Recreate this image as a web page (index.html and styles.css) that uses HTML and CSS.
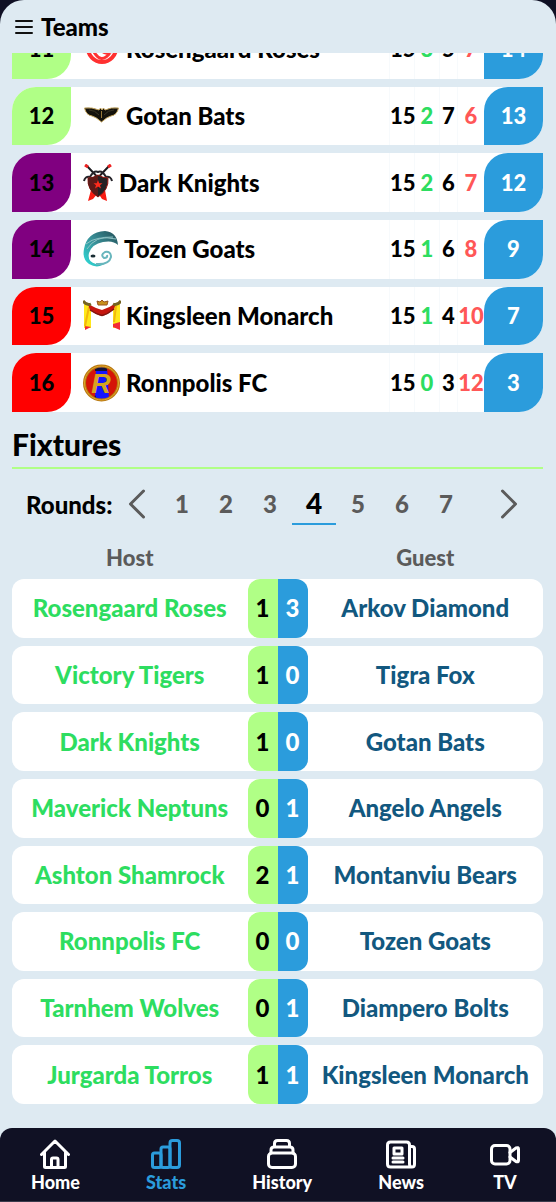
FILE: index.html
```html
<!DOCTYPE html>
<html lang="en">
<head>
<meta charset="utf-8">
<meta name="viewport" content="width=device-width, initial-scale=1">
<title>Teams</title>
<link rel="stylesheet" href="styles.css">
</head>
<body>
<div class="app">
  <header class="topbar">
    <button class="menu" type="button" aria-label="Menu"><svg width="18" height="16" viewBox="0 0 18 16"><path d="M1 2H17M1 8H17M1 14H17"/></svg></button>
    <h1 class="title">Teams</h1>
  </header>
  <main class="scroller">
    <div class="content">
      <table class="standings">
        <colgroup><col class="c-pos"><col><col class="c-num"><col class="c-num"><col class="c-draw"><col class="c-lost"><col class="c-pos"></colgroup>
        <tbody>
          <tr><td class="pos promo">11</td><td class="club"><div class="club-in"><svg width="38" height="38" viewBox="0 0 38 38"><circle cx="19" cy="18" r="14" fill="none" stroke="#ff3030" stroke-width="4"/><path d="M8 16Q18 40 30 18M10 10Q24 34 34 14" fill="none" stroke="#f33" stroke-width="3"/></svg><span>Rosengaard Roses</span></div></td><td class="num">15</td><td class="num won">3</td><td class="num">5</td><td class="num lost">7</td><td class="pts">14</td></tr>
          <tr><td class="pos promo">12</td><td class="club"><div class="club-in"><svg width="38" height="38" viewBox="0 0 38 38"><path d="M1.500 11Q9 10 16 13L17.500 11L19 13L20.500 11L22 13Q28 10 35.500 11Q34 18 28 19Q24 20 18.500 25Q13 20 9 19Q3 18 1.500 11Z" fill="#14120c" stroke="#c3a45d" stroke-width="1"/><path d="M6 13Q12 13 16 18M31 13Q25 13 21 18" stroke="#3b3524" fill="none"/><path d="M18.500 14V21" stroke="#97783a" stroke-width="1"/></svg><span>Gotan Bats</span></div></td><td class="num">15</td><td class="num won">2</td><td class="num">7</td><td class="num lost">6</td><td class="pts">13</td></tr>
          <tr><td class="pos playoff">13</td><td class="club"><div class="club-in"><svg width="31" height="38" viewBox="0 0 31 38"><path d="M8 26L5 37L10 35L15 29L19 35L24 37L22 26Z" fill="#f81b12"/><path d="M3 1L22 21M27 1L8 21" stroke="#1d1b20" stroke-width="2"/><path d="M2 1L5 3M28 1L25 3" stroke="#e22" stroke-width="3"/><path d="M1 17Q2 12 7 13Q11 6 15 8Q19 6 23 13Q28 12 29 17" fill="none" stroke="#26242a" stroke-width="2"/><path d="M5 14Q10 14 15 11Q20 14 25 14Q26 26 15 33Q4 26 5 14Z" fill="#242124" stroke="#9b1712" stroke-width="1"/><path d="M5 14Q10 14 15 11V33Q4 26 5 14" fill="#5c1a18"/><path d="M15 16L16.200 19.200L19.500 19.300L17 21.300L18 24.500L15 22.600L12 24.500L13 21.300L10.500 19.300L13.800 19.200Z" fill="#ff2b1c"/></svg><span>Dark Knights</span></div></td><td class="num">15</td><td class="num won">2</td><td class="num">6</td><td class="num lost">7</td><td class="pts">12</td></tr>
          <tr><td class="pos playoff">14</td><td class="club"><div class="club-in"><svg width="36" height="38" viewBox="0 0 36 38"><defs><linearGradient id="goat" x1="1" y1="0" x2="0" y2="1"><stop offset="0" stop-color="#234f58"/><stop offset=".5" stop-color="#3a9199"/><stop offset="1" stop-color="#2ce0dc"/></linearGradient></defs><path d="M1 19Q4 2 22 1Q34 2 35 15Q30 10 20 12Q9 14 6 23Q4 32 13 34Q22 35 25 31Q16 40 6 34Q-1 29 1 19Z" fill="url(#goat)"/><path d="M3 14Q14 5 33 9M4 19Q12 6 30 7" stroke="#8fc3c5" fill="none"/><path d="M13 34Q26 35 28 27Q28 21 22 22Q17 25 21 28Q25 28 24 25" fill="none" stroke="#68b6bd" stroke-width="2"/><ellipse cx="10" cy="26" rx="2.500" ry="1.500" fill="#182c33"/></svg><span>Tozen Goats</span></div></td><td class="num">15</td><td class="num won">1</td><td class="num">6</td><td class="num lost">8</td><td class="pts">9</td></tr>
          <tr><td class="pos drop">15</td><td class="club"><div class="club-in"><svg width="38" height="38" viewBox="0 0 38 38"><path d="M1 5L8 8L8 31L1 31Z" fill="#ffe81a"/><path d="M37 5L30 8L30 31L37 31Z" fill="#ffe81a"/><path d="M2 33V29L8 30ZM30 27L37 25V33L30 30Z" fill="#f32a35"/><path d="M6 10L2 29M33 9L31 25" stroke="#f2b80c" stroke-width="2"/><path d="M5 7Q12 11 19 13Q26 11 33 6L31 12Q24 18 19 19Q13 18 7 13Z" fill="#c5150e"/><path d="M7 13Q13 17 19 18.500Q25 17 31 12" fill="none" stroke="#7f1610" stroke-width="1.500"/><path d="M0 4Q4 9 8 7M38 4Q34 9 30 7" fill="none" stroke="#756322" stroke-width="3"/><path d="M14 4L17 5L19 3L21 5L25 4L24 8H15Z" fill="#c7901b" stroke="#9a5420" stroke-width="1"/></svg><span>Kingsleen Monarch</span></div></td><td class="num">15</td><td class="num won">1</td><td class="num">4</td><td class="num lost">10</td><td class="pts">7</td></tr>
          <tr><td class="pos drop">16</td><td class="club"><div class="club-in"><svg width="38" height="38" viewBox="0 0 38 38"><circle cx="18.500" cy="19" r="17" fill="#d51408"/><path d="M13 3Q18 1 24 3L26 35Q18 38 12 35Z" fill="#1414ff"/><path d="M12 4L24 3V7H12ZM12 31L14 35H11Z" fill="#12123a"/><circle cx="18.500" cy="19" r="17" fill="none" stroke="#b97811" stroke-width="3"/><circle cx="18.500" cy="19" r="17" fill="none" stroke="#e0a72b" stroke-width="1"/><text class="crest" x="18" y="29" text-anchor="middle">R</text></svg><span>Ronnpolis FC</span></div></td><td class="num">15</td><td class="num won">0</td><td class="num">3</td><td class="num lost">12</td><td class="pts">3</td></tr>
        </tbody>
      </table>

      <h2 class="section">Fixtures</h2>

      <div class="rounds">
        <span class="rounds-label">Rounds:</span>
        <button class="arrow" type="button" aria-label="Previous rounds"><svg width="18" height="32" viewBox="0 0 18 32"><path d="M15.500 3L2.500 16L15.500 29"/></svg></button>
        <div class="strip">
          <button class="round" type="button">1</button><button class="round" type="button">2</button><button class="round" type="button">3</button><button class="round active" type="button" aria-current="true">4</button><button class="round" type="button">5</button><button class="round" type="button">6</button><button class="round" type="button">7</button>
        </div>
        <button class="arrow" type="button" aria-label="Next rounds"><svg width="18" height="32" viewBox="0 0 18 32"><path d="M2.500 3L15.500 16L2.500 29"/></svg></button>
      </div>

      <table class="fixtures">
        <colgroup><col><col class="c-score"><col class="c-score"><col></colgroup>
        <thead><tr><th scope="col">Host</th><td></td><td></td><th scope="col">Guest</th></tr></thead>
        <tbody>
          <tr><td class="host">Rosengaard Roses</td><td class="score sh">1</td><td class="score sg">3</td><td class="guest">Arkov Diamond</td></tr>
          <tr><td class="host">Victory Tigers</td><td class="score sh">1</td><td class="score sg">0</td><td class="guest">Tigra Fox</td></tr>
          <tr><td class="host">Dark Knights</td><td class="score sh">1</td><td class="score sg">0</td><td class="guest">Gotan Bats</td></tr>
          <tr><td class="host">Maverick Neptuns</td><td class="score sh">0</td><td class="score sg">1</td><td class="guest">Angelo Angels</td></tr>
          <tr><td class="host">Ashton Shamrock</td><td class="score sh">2</td><td class="score sg">1</td><td class="guest">Montanviu Bears</td></tr>
          <tr><td class="host">Ronnpolis FC</td><td class="score sh">0</td><td class="score sg">0</td><td class="guest">Tozen Goats</td></tr>
          <tr><td class="host">Tarnhem Wolves</td><td class="score sh">0</td><td class="score sg">1</td><td class="guest">Diampero Bolts</td></tr>
          <tr><td class="host">Jurgarda Torros</td><td class="score sh">1</td><td class="score sg">1</td><td class="guest">Kingsleen Monarch</td></tr>
        </tbody>
      </table>
    </div>
  </main>
  <nav class="tabs">
    <a class="tab" href="#home"><svg width="30" height="30" viewBox="0 0 30 30"><path d="M1.500 15.500L15 2L28.500 15.500M4.500 13V27.500Q4.500 28.500 5.500 28.500H24.500Q25.500 28.500 25.500 27.500V13M11.500 28V20.500Q11.500 19 13 19H16.500Q18 19 18 20.500V28"/></svg>Home</a>
    <a class="tab current" href="#stats" aria-current="page"><svg width="30" height="30" viewBox="0 0 30 30"><rect x="1.500" y="14" width="8.500" height="14.500" rx="2"/><rect x="10" y="8" width="9" height="20.500" rx="2"/><rect x="19" y="1.500" width="9.500" height="27" rx="2.500"/></svg>Stats</a>
    <a class="tab" href="#history"><svg width="30" height="30" viewBox="0 0 30 30"><rect x="1.500" y="14" width="27" height="14.500" rx="3.500"/><path d="M4 14V11Q4 8 7 8H23Q26 8 26 11V14M7.500 8V4.500Q7.500 1.500 10.500 1.500H19.500Q22.500 1.500 22.500 4.500V8"/></svg>History</a>
    <a class="tab" href="#news"><svg width="30" height="30" viewBox="0 0 30 30"><path d="M23.500 25V6Q23.500 3 20.500 3H4.500Q1.500 3 1.500 6V25Q1.500 28 4.500 28H26Q28.500 28 28.500 25V10Q28.500 7.500 26 7.500H24M23.500 25Q23.500 28 26 28"/><rect x="8" y="9" width="8" height="6"/><path d="M7 19H17M7 23H17"/></svg>News</a>
    <a class="tab" href="#tv"><svg width="30" height="30" viewBox="0 0 30 30"><rect x="1.500" y="6.500" width="18.500" height="18.500" rx="3.500"/><path d="M20 13.500L26 9Q28.500 8 28.500 10V21.500Q28.500 23.500 26 22.500L20 18"/></svg>TV</a>
  </nav>
</div>
</body>
</html>
```
FILE: styles.css
```css
* { box-sizing: border-box; }
body {
  margin: 0;
  background: #0f1024;
  color: #000;
  font-family: Lato, "Open Sans", sans-serif;
  font-weight: 900;
  font-size: 24px;
}
button {
  margin: 0;
  padding: 0;
  border: 0;
  background: none;
  font: inherit;
  color: inherit;
}
svg { display: block; flex: none; }
.app {
  height: 100vh;
  display: flex;
  flex-direction: column;
  background: #deeaf2;
  border-radius: 24px 24px 0 0;
  overflow: hidden;
}

.topbar {
  display: flex;
  align-items: center;
  gap: 8px;
  padding: 9px 15px 8px;
}
.menu path { stroke: #111; stroke-width: 2; stroke-linecap: round; }
.title { margin: 0; font-size: 24px; line-height: 36px; font-weight: 900; }

.scroller {
  flex: 1;
  min-height: 0;
  display: flex;
  flex-direction: column-reverse;
  overflow-y: auto;
  scrollbar-width: none;
}
.content { flex: none; padding: 0 13px 16px 12px; }

table { width: 100%; table-layout: fixed; border-collapse: separate; border-spacing: 0 8px; }
td, th { padding: 0; text-align: center; white-space: nowrap; line-height: 32px; }
.standings { height: 408px; }
.c-pos { width: 59px; }
.c-num { width: 25px; }
.c-draw { width: 18px; }
.c-lost { width: 27px; }
.standings td { background: #fff; }
.standings .pos, .standings .pts, .score { position: relative; isolation: isolate; }
.pos::before, .pts::before, .score::before { content: ""; position: absolute; inset: 0; z-index: -1; }
.pos, .pos::before { border-top-left-radius: 24px; }
.pos::before { border-bottom-right-radius: 24px; }
.pts { border-bottom-right-radius: 24px; color: #fff; }
.pts::before { background: #2b9cdc; border-radius: 24px 0; }
.promo::before { background: #b0ff86; }
.playoff::before { background: #800080; }
.drop::before { background: #f00; }
.club-in { display: flex; align-items: center; gap: 5px; padding-left: 12px; }
.crest { font: italic 700 27px "Liberation Sans", sans-serif; fill: #d5a51f; }
.num { border-left: 1px solid #f7fafc; font-size: 22px; }
.pos, .pts { font-size: 22px; }
.won { color: #2ddd60; }
.lost { color: #ff5757; }

.section {
  margin: 0;
  padding: 2px 0 1px;
  border-bottom: 2px solid #b0ff86;
  font-size: 30px;
  line-height: 44px;
  font-weight: 900;
}

.rounds {
  display: flex;
  align-items: center;
  justify-content: space-between;
  padding: 14px 25px 0 14px;
}
.rounds-label { flex: 0 0 88px; }
.arrow path { fill: none; stroke: #5b5b5b; stroke-width: 3; stroke-linecap: round; stroke-linejoin: round; }
.strip { display: flex; flex: 0 1 326px; overflow: hidden; }
.round { flex: 0 0 44px; height: 42px; color: #5b5b5b; border-bottom: 2px solid transparent; }
.active { color: #000; font-size: 28px; border-color: #2b9cdc; }

.fixtures { height: 587px; }
.c-score { width: 30px; }
.fixtures th { height: 38px; vertical-align: bottom; line-height: 26px; color: #5b5b5b; font-size: 22px; font-weight: 900; }
.fixtures tbody td { background: #fff; }
.fixtures .host { color: #2ddd60; border-radius: 12px 0 0 12px; }
.fixtures .guest { color: #12587f; border-radius: 0 12px 12px 0; }
.sh::before { background: #b0ff86; border-radius: 12px 0 0 12px; }
.sg::before { background: #2b9cdc; border-radius: 0 12px 12px 0; }
.fixtures .sg { color: #fff; }

.tabs {
  display: flex;
  justify-content: space-between;
  padding: 11px 36px 9px 31px;
  background: #101124;
  border-bottom: 1px solid #3b3c4c;
  border-radius: 12px 12px 0 0;
}
.tab {
  display: flex;
  flex-direction: column;
  align-items: center;
  gap: 4px;
  color: #fff;
  font-size: 18px;
  line-height: 19px;
  text-decoration: none;
}
.tab svg { fill: none; stroke: currentColor; stroke-width: 3; stroke-linecap: round; stroke-linejoin: round; }
.current { color: #2b9cdc; }
```
